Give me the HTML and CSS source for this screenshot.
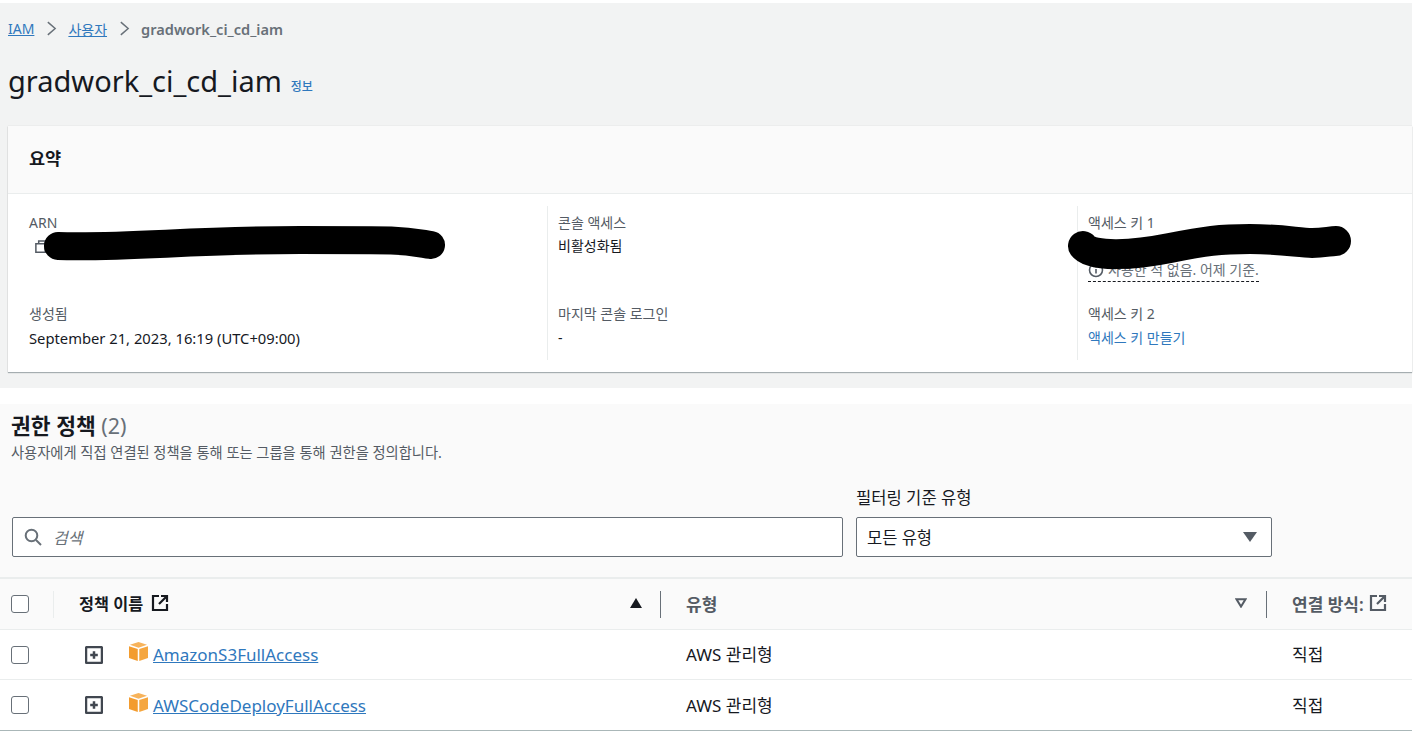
FILE: index.html
```html
<!DOCTYPE html>
<html lang="ko">
<head>
<meta charset="utf-8">
<title>gradwork_ci_cd_iam</title>
<link rel="stylesheet" href="styles.css">
</head>
<body>
<div class="page">
  <section class="top">
    <nav class="crumbs">
      <a href="#">IAM</a>
      <svg class="chev" viewBox="0 0 12 16"><path d="M2 1l8 7-8 7"/></svg>
      <a href="#">사용자</a>
      <svg class="chev" viewBox="0 0 12 16"><path d="M2 1l8 7-8 7"/></svg>
      <span class="crumb-current">gradwork_ci_cd_iam</span>
    </nav>
    <div class="title-row">
      <h1>gradwork_ci_cd_iam</h1>
      <a class="info" href="#">정보</a>
    </div>
    <div class="card">
      <h2 class="card-head">요약</h2>
      <div class="card-body">
        <div class="col">
          <div class="item">
            <div class="label">ARN</div>
            <div class="value">
              <svg class="copy" viewBox="0 0 16 16"><path d="M5 5V2h7v3M2 5h10v9H2z"/></svg>
            </div>
          </div>
          <div class="item">
            <div class="label">생성됨</div>
            <div class="value date">September 21, 2023, 16:19 (UTC+09:00)</div>
          </div>
        </div>
        <div class="col">
          <div class="item">
            <div class="label">콘솔 액세스</div>
            <div class="value">비활성화됨</div>
          </div>
          <div class="item">
            <div class="label">마지막 콘솔 로그인</div>
            <div class="value">-</div>
          </div>
        </div>
        <div class="col">
          <div class="item">
            <div class="label">액세스 키 1</div>
            <div class="value"></div>
            <div class="key-note">
              <svg class="note-icon" viewBox="0 0 16 16"><circle cx="8" cy="8" r="6.5"/><path d="M8 7v4.5M8 4v1.6"/></svg>
              <span>사용한 적 없음. 어제 기준.</span>
            </div>
          </div>
          <div class="item">
            <div class="label">액세스 키 2</div>
            <div class="value"><a href="#">액세스 키 만들기</a></div>
          </div>
        </div>
      </div>
    </div>
  </section>

  <section class="policies">
    <div class="policies-head">
      <h2>권한 정책 <span class="count">(2)</span></h2>
      <p>사용자에게 직접 연결된 정책을 통해 또는 그룹을 통해 권한을 정의합니다.</p>
    </div>
    <div class="filters">
      <div class="search">
        <svg class="search-icon" viewBox="0 0 18 18"><circle cx="7.5" cy="7.5" r="5.8"/><path d="M12 12l5 5"/></svg>
        <span class="placeholder">검색</span>
      </div>
      <div class="filter-field">
        <div class="filter-label">필터링 기준 유형</div>
        <div class="select">
          <span>모든 유형</span>
          <svg class="caret" viewBox="0 0 14 12"><path d="M0 1h14L7 11z"/></svg>
        </div>
      </div>
    </div>
    <div class="table">
      <div class="row row-head">
        <div class="cell cell-check"><span class="checkbox"></span><i class="sep sep-light"></i></div>
        <div class="cell cell-name">
          <span class="th">정책 이름</span>
          <svg class="ext" viewBox="0 0 18 18"><path d="M8 2H2v14h14v-6M10 2h6v6M16 2L8 10"/></svg>
          <svg class="sort sort-filled" viewBox="0 0 12 10"><path d="M6 0l6 10H0z"/></svg>
          <i class="sep"></i>
        </div>
        <div class="cell cell-type">
          <span class="th th-muted">유형</span>
          <svg class="sort sort-open" viewBox="0 0 12 10"><path d="M1.5 1.2h9L6 8.6z"/></svg>
          <i class="sep"></i>
        </div>
        <div class="cell cell-link">
          <span class="th th-muted">연결 방식:</span>
          <svg class="ext ext-muted" viewBox="0 0 18 18"><path d="M8 2H2v14h14v-6M10 2h6v6M16 2L8 10"/></svg>
        </div>
      </div>
      <div class="row">
        <div class="cell cell-check"><span class="checkbox"></span></div>
        <div class="cell cell-name">
          <svg class="expand" viewBox="0 0 18 18"><rect x="1" y="1" width="16" height="16" rx="1.5"/><path d="M9 5.2v7.6M5.2 9h7.6"/></svg>
          <svg class="cube" viewBox="0 0 20 20"><path class="c1" d="M10 0l9 3-9 3-9-3z"/><path class="c2" d="M0 4.4l9.2 3V20L0 16.8z"/><path class="c3" d="M20 4.4l-9.2 3V20l9.2-3.2z"/></svg>
          <a class="policy" href="#">AmazonS3FullAccess</a>
        </div>
        <div class="cell cell-type">AWS 관리형</div>
        <div class="cell cell-link">직접</div>
      </div>
      <div class="row">
        <div class="cell cell-check"><span class="checkbox"></span></div>
        <div class="cell cell-name">
          <svg class="expand" viewBox="0 0 18 18"><rect x="1" y="1" width="16" height="16" rx="1.5"/><path d="M9 5.2v7.6M5.2 9h7.6"/></svg>
          <svg class="cube" viewBox="0 0 20 20"><path class="c1" d="M10 0l9 3-9 3-9-3z"/><path class="c2" d="M0 4.4l9.2 3V20L0 16.8z"/><path class="c3" d="M20 4.4l-9.2 3V20l9.2-3.2z"/></svg>
          <a class="policy" href="#">AWSCodeDeployFullAccess</a>
        </div>
        <div class="cell cell-type">AWS 관리형</div>
        <div class="cell cell-link">직접</div>
      </div>
    </div>
  </section>
</div>
<svg class="scribble" viewBox="0 0 1418 742">
  <path class="s-arn" d="M58 246C130 248 190 240 300 240S400 240 431 245"/>
  <path class="s-key" d="M1083 246C1092 258 1135 255 1170 248S1220 239 1250 239S1300 243 1312 243S1330 241 1336 241"/>
</svg>
</body>
</html>
```

FILE: styles.css
```css
* { box-sizing: border-box; }
html, body { margin: 0; padding: 0; background: #fff; }
body {
  position: relative;
  width: 1418px;
  height: 742px;
  overflow: hidden;
  font-family: "Noto Sans", "Noto Sans CJK KR", sans-serif;
  font-size: 14px;
  color: #16191f;
}
a { color: #2f78bd; }
h1, h2, p { margin: 0; font-weight: normal; }

.page { width: 1412px; padding-top: 3px; }

.top { background: #f2f3f3; height: 385px; padding: 0 0 16px 8px; display: flex; flex-direction: column; }
.crumbs { height: 52px; padding: 3px 0 4px; display: flex; align-items: center; font-size: 14px; }
.crumbs a { text-decoration: underline; }
.chev { width: 11px; height: 15px; margin: 0 11px 0 12px; fill: none; stroke: #687078; stroke-width: 1.6; }
.crumb-current { color: #687078; font-weight: 600; font-size: 14.6px; }
.title-row { height: 71px; display: flex; align-items: flex-start; gap: 9px; padding-top: 5px; }
h1 { font-size: 29px; line-height: 41px; }
.info { font-size: 12px; font-weight: 500; text-decoration: none; margin-top: 17px; }

.card { flex: 1; background: #fff; box-shadow: 0 1px 1px rgba(0,28,36,.3), 0 0 1px rgba(0,28,36,.15); }
.card-head { height: 68px; background: #fafafa; border-bottom: 1px solid #eaeded; padding: 0 21px; font-size: 17.5px; font-weight: 600; line-height: 65px; }
.card-body { display: grid; grid-template-columns: 539px 530px 1fr; padding: 12px 0; height: 178px; }
.col { padding-left: 10px; border-left: 1px solid #eaeded; display: flex; flex-direction: column; }
.col:first-child { border-left: 0; padding-left: 21px; }
.item { height: 91px; padding-top: 7px; }
.item + .item { height: 63px; }
.label { color: #545b64; font-size: 14px; line-height: 20px; }
.value { font-size: 14px; line-height: 24px; height: 24px; margin-top: 1px; }
.item + .item .value { margin-top: 2px; }
.date { font-size: 14.75px; }
.value a { text-decoration: none; }
.copy { width: 15px; height: 15px; margin: 6px 0 0 5px; fill: none; stroke: #545b64; stroke-width: 1.6; display: block; }
.key-note { display: inline-flex; align-items: center; gap: 4px; color: #687078; font-size: 14px; line-height: 20px; height: 23px; border-bottom: 1px dashed #16191f; margin-top: 1px; }
.note-icon { width: 16px; height: 16px; fill: none; stroke: #545b64; stroke-width: 1.6; }

.policies { margin-top: 16px; background: #fafafa; }
.policies-head { height: 65px; padding: 8px 0 0 11px; }
.policies-head h2 { font-size: 21.5px; line-height: 28px; font-weight: 700; }
.count { color: #687078; font-weight: 400; }
.policies-head p { color: #545b64; font-size: 14.27px; line-height: 18px; margin-top: 4px; }

.filters { display: grid; grid-template-columns: 831px 416px; gap: 13px; padding-left: 12px; height: 108px; align-items: start; }
.search { margin-top: 48px; height: 40px; background: #fff; border: 1px solid #687078; border-radius: 2px; display: flex; align-items: center; padding-left: 11px; gap: 11px; }
.search-icon { width: 18px; height: 18px; fill: none; stroke: #687078; stroke-width: 2; }
.placeholder { color: #687078; font-style: italic; font-size: 16px; }
.filter-field { display: flex; flex-direction: column; padding-top: 17px; }
.filter-label { font-size: 16.6px; line-height: 24px; height: 31px; color: #16191f; }
.select { height: 40px; background: #fff; border: 1px solid #687078; border-radius: 2px; display: flex; align-items: center; justify-content: space-between; padding: 0 14px 0 10px; font-size: 16.5px; }
.caret { width: 14px; height: 12px; fill: #545b64; }

.table { background: #fff; border-bottom: 1px solid #aab7b8; }
.row { display: grid; grid-template-columns: 53px 607px 606px 146px; height: 50px; align-items: center; border-top: 1px solid #eaeded; font-size: 17px; }
.row:last-child { height: 51px; }
.row-head { height: 52px; background: #fafafa; border-top: 2px solid #eaeded; }
.cell { display: flex; align-items: center; height: 100%; position: relative; padding-left: 26px; }
.cell-check { padding-left: 11px; }
.cell-name { padding-left: 32px; }
.cell-type, .cell-link, .row-head .cell-name { padding-bottom: 2px; }
.row-head .cell-name { padding-left: 26px; }
.checkbox { width: 18px; height: 18px; background: #fff; border: 1.5px solid #687078; border-radius: 3px; display: block; }
.th { font-weight: 600; font-size: 16.3px; }
.th-muted { color: #545b64; font-size: 17px; }
.ext { width: 18px; height: 18px; margin-left: 8px; fill: none; stroke: #16191f; stroke-width: 2.2; }
.ext-muted { stroke: #545b64; margin-left: 5px; }
.sort { width: 12px; height: 10px; position: absolute; }
.sort-filled { right: 18px; fill: #16191f; }
.sort-open { right: 19px; fill: none; stroke: #545b64; stroke-width: 2; }
.sep { position: absolute; right: -1px; top: 12px; height: 27px; width: 1px; background: #687078; }
.sep-light { background: #eaeded; }
.expand { width: 18px; height: 18px; fill: none; stroke: #414750; stroke-width: 2.5; flex: none; }
.cube { width: 19px; height: 19px; margin: -6px 0 0 26px; flex: none; }
.c1 { fill: #f7b35b; }
.c2 { fill: #f39c2f; }
.c3 { fill: #f5a63f; }
.policy { margin-left: 5px; font-size: 17px; }

.scribble { position: absolute; left: 0; top: 0; width: 1418px; height: 742px; pointer-events: none; fill: none; stroke: #000; stroke-linecap: round; stroke-linejoin: round; }
.s-arn { stroke-width: 28px; }
.s-key { stroke-width: 30px; }
```
